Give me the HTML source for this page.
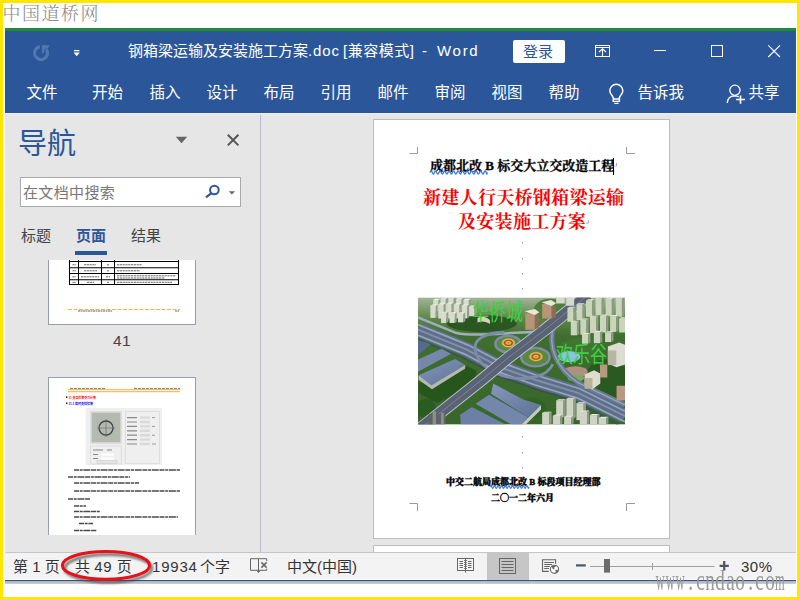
<!DOCTYPE html>
<html lang="zh-CN">
<head>
<meta charset="utf-8">
<title>钢箱梁运输及安装施工方案.doc [兼容模式] - Word</title>
<style>
html,body{margin:0;padding:0;}
body{width:800px;height:600px;overflow:hidden;background:#FFE600;position:relative;
  font-family:"Liberation Sans","Noto Sans CJK SC",sans-serif;}
.abs{position:absolute;}
#white{left:3px;top:3px;width:794px;height:594px;background:#fff;}
#wm1{left:2.5px;top:1px;letter-spacing:1.5px;font-weight:300;font-family:"Liberation Serif","Noto Serif CJK SC",serif;font-size:18px;color:#8a8a8a;line-height:26px;white-space:nowrap;}
#green{left:5px;top:28px;width:791px;height:3px;background:#1F8B34;}
#blue{left:5px;top:31px;width:791px;height:82px;background:#2B579A;}
#gray{left:5px;top:113px;width:791px;height:439px;background:#E6E6E6;border-top:1px solid #EFEEEA;box-sizing:border-box;}
.t{position:absolute;white-space:nowrap;color:#fff;line-height:20px;}
.title{top:41px;font-size:15px;}
.menu{top:83px;font-size:15.5px;}
#login{left:513px;top:40px;width:52px;height:23px;background:#fff;border-radius:2px;}
#login span{position:absolute;left:10px;top:2px;font-size:15px;line-height:20px;color:#2B579A;white-space:nowrap;}
#status{left:5px;top:552px;width:791px;height:28px;background:#F3F3F3;border-top:1px solid #C6C6C6;box-sizing:border-box;}
#sline{left:5px;top:579px;width:791px;height:1px;background:#2B579A;border-top:1px solid #FAFAF6;}
#sshadow{left:5px;top:581px;width:791px;height:3px;background:linear-gradient(#b0b0b0,#cfcfcf);}
#viewsel{left:487px;top:553px;width:42px;height:27px;background:#C6C6C6;}
.st{position:absolute;white-space:nowrap;color:#333;font-size:15px;line-height:20px;top:557px;}
.st b{font-weight:normal;letter-spacing:0.8px;}
#wm2{left:655.6px;top:572.6px;font-family:"Liberation Serif",serif;font-size:20px;line-height:20px;height:20px;color:#989898;white-space:nowrap;transform-origin:0 16.75px;transform:scaleY(1.52);}
#wm2 i{display:inline-block;width:9.95px;text-align:center;font-style:normal;}
#wm2 i b{display:inline-block;font-weight:normal;transform:scaleX(0.95);}
#wm2 i b.w{transform:scaleX(0.62);margin:0 -3px;}
#navdiv{left:260px;top:115px;width:1px;height:437px;background:#B9B9CE;}
#navtitle{left:18px;top:124px;font-size:29px;line-height:40px;font-weight:400;color:#2B579A;white-space:nowrap;}
#search{left:20px;top:177px;width:221px;height:30px;background:#fff;border:1px solid #ABABAB;box-sizing:border-box;}
#search span{position:absolute;left:2px;top:5px;letter-spacing:0.35px;font-size:15px;line-height:20px;color:#767676;white-space:nowrap;}
.tab{position:absolute;top:226px;font-size:15px;line-height:20px;color:#444;white-space:nowrap;}
#tabsel{color:#2B579A;font-weight:bold;}
#tabline{left:75px;top:251px;width:32px;height:4px;background:#2B579A;}
.thumb{position:absolute;background:#fff;border:1px solid #94A0B2;box-sizing:border-box;overflow:hidden;}
#th1{left:48px;top:260px;width:148px;height:65px;border-top:none;}
#th2{left:48px;top:377px;width:148px;height:158px;border-bottom:none;}
#thnum{left:113px;top:331px;font-size:15.5px;letter-spacing:0.3px;line-height:20px;color:#444;}
#page{left:373px;top:119px;width:297px;height:420px;background:#fff;border:1px solid #BDBDBD;box-sizing:border-box;}
#page2{left:373px;top:545px;width:297px;height:7px;background:#fff;border:1px solid #BDBDBD;border-bottom:none;box-sizing:border-box;}
.doc{position:absolute;white-space:nowrap;font-family:"Liberation Serif","Noto Serif CJK SC",serif;font-weight:bold;color:#000;}
#svgicons{position:absolute;left:0;top:0;width:800px;height:600px;pointer-events:none;}
</style>
</head>
<body>
<div id="white" class="abs"></div>
<div id="wm1" class="abs">中国道桥网</div>
<div id="green" class="abs"></div>
<div id="blue" class="abs"></div>
<div id="gray" class="abs"></div>

<!-- title bar -->
<div class="t title" style="left:128px">钢箱梁运输及安装施工方案<span style="letter-spacing:0.9px">.doc</span></div>
<div class="t title" style="left:343px;letter-spacing:0.5px">[兼容模式]</div>
<div class="t title" style="left:422px">-</div>
<div class="t title" style="left:437px;letter-spacing:1.7px">Word</div>
<div id="login" class="abs"><span>登录</span></div>

<!-- ribbon tabs -->
<div class="t menu" style="left:26.5px">文件</div>
<div class="t menu" style="left:92px">开始</div>
<div class="t menu" style="left:149.5px">插入</div>
<div class="t menu" style="left:206.5px">设计</div>
<div class="t menu" style="left:263.5px">布局</div>
<div class="t menu" style="left:320.5px">引用</div>
<div class="t menu" style="left:377.5px">邮件</div>
<div class="t menu" style="left:434.5px">审阅</div>
<div class="t menu" style="left:491.5px">视图</div>
<div class="t menu" style="left:548.5px">帮助</div>
<div class="t menu" style="left:637.5px">告诉我</div>
<div class="t menu" style="left:748.5px">共享</div>

<!-- navigation pane -->
<div id="navdiv" class="abs"></div>
<div id="navtitle" class="abs">导航</div>
<div id="search" class="abs"><span>在文档中搜索</span></div>
<div class="tab" style="left:21px">标题</div>
<div class="tab" id="tabsel" style="left:76px">页面</div>
<div class="tab" style="left:131px">结果</div>
<div id="tabline" class="abs"></div>
<div id="th1" class="thumb"><svg width="146" height="64" viewBox="49 260 146 64" style="position:absolute;left:0;top:0">
<g fill="none" stroke="#000" stroke-width="1.05">
<path d="M69.5 260 V284.5 M78.5 260 V284.5 M101.5 260 V284.5 M114.5 260 V284.5 M178.5 260 V284.5"/>
<path d="M69 261.5 H179 M69 267.8 H179 M69 273.5 H179 M69 279.8 H179 M69 284.5 H179"/>
</g>
<g stroke="#666" stroke-width="1" fill="none" stroke-dasharray="2.2 0.6">
<path d="M72.5 264.8 H76 M84 264.8 H96 M107 264.8 H109 M117 264.8 H142"/>
<path d="M72.5 270.8 H76 M84 270.8 H97 M107 270.8 H109 M117 270.8 H140"/>
<path d="M72.5 276.8 H76 M81 276.8 H99 M106 276.8 H110 M117 275.8 H176 M117 278 H165"/>
<path d="M72.5 282.3 H76 M87 282.3 H94 M107 282.3 H109 M117 282.3 H172"/>
</g>
<path d="M68 309.5 H180" stroke="#F2B24A" stroke-width="1" stroke-dasharray="4 1.5" fill="none"/>
<path d="M78 311 H112 M175 311 H179" stroke="#666" stroke-width="1.2" stroke-dasharray="2 0.5" fill="none"/>
</svg></div>
<div id="thnum" class="abs">41</div>
<div id="th2" class="thumb"><svg width="146" height="157" viewBox="49 378 146 157" style="position:absolute;left:0;top:0">
<path d="M68 389.6 H180 M68 391.6 H180" stroke="#F7BE62" stroke-width="1.2" fill="none"/>
<path d="M70 388.4 H105 M134 388.4 H180" stroke="#777" stroke-width="1" stroke-dasharray="3 1" fill="none"/>
<rect x="66" y="396.5" width="1.4" height="1.4" fill="#000"/><rect x="66" y="402.5" width="1.4" height="1.4" fill="#000"/>
<text x="68.5" y="399.2" font-family="'Liberation Sans','Noto Sans CJK SC',sans-serif" font-size="3.3" font-weight="bold" fill="#F01010" textLength="27.5" lengthAdjust="spacingAndGlyphs">11 支架验算受力计算</text>
<text x="68.5" y="404.8" font-family="'Liberation Sans','Noto Sans CJK SC',sans-serif" font-size="3.3" font-weight="bold" fill="#1010F0" textLength="24.5" lengthAdjust="spacingAndGlyphs">11.1 临时支撑验算</text>
<rect x="85.5" y="408" width="76.5" height="57" fill="#EFEFEF"/>
<rect x="90.5" y="411.5" width="31" height="32" fill="#EAEAEA" stroke="#D5D5D5" stroke-width="0.6"/>
<rect x="91.5" y="412.5" width="29" height="30" fill="#B4BAB0"/>
<circle cx="106" cy="428" r="7" fill="none" stroke="#444" stroke-width="1.3"/>
<path d="M97 428 H115 M106 419 V437" stroke="#666" stroke-width="0.6" fill="none"/>
<rect x="125.5" y="411.5" width="34" height="52" fill="none" stroke="#D8D8D8" stroke-width="0.7"/>
<g stroke="#8a8a8a" stroke-width="1.2" fill="none">
<path d="M127 417.6 H137 M127 422 H137 M127 426.4 H137 M127 430.8 H137 M127 435.2 H137 M127 439.6 H137 M127 444 H137"/>
</g>
<g stroke="#DADADA" stroke-width="2.4" fill="none">
<path d="M140 417.6 H150 M140 422 H150 M140 426.4 H150 M140 430.8 H150 M140 435.2 H150 M140 439.6 H150 M140 444 H150"/>
</g>
<path d="M152 417.6 H155 M152 426.4 H155 M152 435.2 H155 M152 444 H156" stroke="#999" stroke-width="1" fill="none"/>
<rect x="90.5" y="446" width="31" height="18" fill="none" stroke="#D8D8D8" stroke-width="0.7"/>
<path d="M93 450 H103 M93 454.5 H98 M93 458.5 H98 M107 450 H112" stroke="#888" stroke-width="1.1" fill="none"/>
<path d="M101 454.5 H114 M101 458.5 H114" stroke="#fff" stroke-width="2.2" fill="none"/>
<rect x="97" y="460.4" width="20" height="3" fill="#E4E4E4" stroke="#C8C8C8" stroke-width="0.5"/>
<g stroke="#4a4a4a" stroke-width="1.5" fill="none" stroke-dasharray="5 0.7 3 0.7 7 0.7">
<path d="M74 470 H180"/><path d="M68 477 H130"/><path d="M74 483 H139"/><path d="M74 491 H180"/><path d="M68 499 H90"/><path d="M74 506 H86"/><path d="M74 511.6 H100"/><path d="M74 517 H178"/><path d="M79 523.6 H93"/><path d="M74 530.4 H97"/>
</g>
</svg></div>

<!-- document -->
<div id="page" class="abs"></div>
<div id="page2" class="abs"></div>
<div class="doc" style="left:430px;top:156px;font-size:13px;line-height:20px;-webkit-text-stroke:0.3px #000;">成都北改 B 标交大立交改造工程</div>
<div class="doc" style="left:423px;top:185px;font-size:18px;line-height:26px;letter-spacing:0.3px;color:#FF0000;">新建人行天桥钢箱梁运输</div>
<div class="doc" style="left:458px;top:209px;font-size:18px;line-height:26px;letter-spacing:0.3px;color:#FF0000;">及安装施工方案</div>
<svg class="abs" style="left:418px;top:297px" width="207" height="128" viewBox="28 25 737 453">
<defs>
<filter id="pb" x="-5%" y="-5%" width="110%" height="110%"><feGaussianBlur stdDeviation="2"/></filter>
<linearGradient id="roof" x1="0" y1="0" x2="1" y2="1"><stop offset="0" stop-color="#8597BC"/><stop offset="1" stop-color="#5E7095"/></linearGradient>
<linearGradient id="sky" x1="0" y1="0" x2="0" y2="1"><stop offset="0" stop-color="#A3B59A"/><stop offset="0.16" stop-color="#5F8749"/><stop offset="0.3" stop-color="#3F6E2F"/><stop offset="1" stop-color="#386629"/></linearGradient>
<radialGradient id="flw"><stop offset="0" stop-color="#B8902E"/><stop offset="0.3" stop-color="#D9BC48"/><stop offset="0.55" stop-color="#C43626"/><stop offset="0.78" stop-color="#DCC650"/><stop offset="1" stop-color="#86A84E"/></radialGradient>
<clipPath id="pc"><rect x="28" y="25" width="737" height="453"/></clipPath>
</defs>
<g clip-path="url(#pc)">
<rect x="28" y="25" width="737" height="453" fill="url(#sky)"/>
<g filter="url(#pb)">
<!-- tree masses -->
<ellipse cx="255" cy="118" rx="125" ry="30" fill="#2C5722"/>
<path d="M75 340 L200 268 L236 285 L232 330 L96 402 L30 365 L30 325 Z" fill="#27571D"/>
<ellipse cx="700" cy="320" rx="80" ry="75" fill="#2C5A23"/>
<ellipse cx="610" cy="205" rx="80" ry="36" fill="#3F7433"/>
<ellipse cx="430" cy="420" rx="55" ry="36" fill="#2F6424"/>
<ellipse cx="55" cy="420" rx="36" ry="34" fill="#2B5C20"/>
<ellipse cx="500" cy="70" rx="60" ry="40" fill="#4E7F3E"/>
<!-- park + pond -->
<ellipse cx="588" cy="290" rx="44" ry="20" fill="#B0907E"/>
<ellipse cx="590" cy="312" rx="30" ry="12" fill="#7FA860"/>
<ellipse cx="566" cy="236" rx="40" ry="20" fill="#86C4E0"/>
<!-- upper light ramp -->
<path d="M28 96 L165 152 C230 166 330 152 395 150 L490 146" fill="none" stroke="#A2AEC0" stroke-width="9"/>
<!-- main highway NW-SE -->
<path d="M28 140 L200 210 L324 275 L450 320 L600 366 L765 448" fill="none" stroke="#5E6E88" stroke-width="52" stroke-linejoin="round"/>
<path d="M28 122 L205 194 L330 259 L455 304 L604 350 L765 430" fill="none" stroke="#93A3BC" stroke-width="6"/>
<path d="M28 140 L200 210 L324 275 L450 320 L600 366 L765 448" fill="none" stroke="#8190AA" stroke-width="7"/>
<path d="M28 160 L194 227 L318 292 L445 337 L596 383 L765 468" fill="none" stroke="#97A6BE" stroke-width="6"/>
<path d="M28 175 L188 240 L312 304 L440 350 L590 396 L740 478" fill="none" stroke="#3E4C60" stroke-width="5"/>
<!-- right parallel ramp -->
<path d="M512 122 C488 200 520 278 600 330 L765 408" fill="none" stroke="#6C7B98" stroke-width="18"/>
<path d="M512 122 C488 200 520 278 600 330 L765 408" fill="none" stroke="#9AA8C0" stroke-width="4"/>
<!-- ramps -->
<g fill="none" stroke="#7D8CA6" stroke-width="10">
<path d="M335 150 C262 150 224 178 232 214 C240 258 286 296 345 308 C420 324 490 306 508 262"/>
<ellipse cx="349" cy="191" rx="45" ry="29"/>
<ellipse cx="446" cy="238" rx="50" ry="32"/>
</g>
<ellipse cx="349" cy="191" rx="40" ry="24" fill="#5B883C"/>
<ellipse cx="446" cy="238" rx="45" ry="27" fill="#5B883C"/>
<ellipse cx="350" cy="187" rx="25" ry="17" fill="url(#flw)"/>
<ellipse cx="448" cy="236" rx="25" ry="17" fill="url(#flw)"/>
<!-- cross road SW-NE (bridge) -->
<path d="M36 492 L259 315 L349 240 L480 140 L634 16" fill="none" stroke="#C4CBD6" stroke-width="44"/>
<path d="M36 492 L259 315 L349 240 L480 140 L634 16" fill="none" stroke="#5A6474" stroke-width="38"/>
<path d="M36 492 L259 315 L349 240 L480 140 L634 16" fill="none" stroke="#8791A4" stroke-width="2.5"/>
<!-- roofs left -->
<path d="M28 176 L74 192 L28 230 Z" fill="#566A8E"/>
<path d="M28 246 L112 208 L146 226 L28 290 Z" fill="#7587AB"/>
<path d="M30 302 L160 244 L196 266 L76 338 Z" fill="url(#roof)"/>
<path d="M30 302 L76 338 L196 266 L196 278 L78 352 L30 318 Z" fill="#B4B9B2"/>
<!-- roofs bottom -->
<path d="M296 332 L401 388 L466 408 L420 452 L288 368 Z" fill="url(#roof)"/>
<path d="M281 372 L420 452 L396 478 L360 478 L233 404 Z" fill="#7386AC"/>
<path d="M220 415 L340 478 L180 478 L178 443 Z" fill="#6C7FA5"/>
<path d="M466 408 L466 424 L412 478 L396 478 Z" fill="#C5C9C2"/>
<!-- buildings upper-left -->
<g><path d="M82 34 h19 v40 h-19z" fill="#D6DDCC"/><path d="M101 34 l7 -4 v40 l-7 4z" fill="#93A08A"/><path d="M82 34 l7 -4 h19 l-7 4z" fill="#EEF1E6"/><path d="M108 30 h19 v46 h-19z" fill="#D6DDCC"/><path d="M127 30 l7 -4 v46 l-7 4z" fill="#93A08A"/><path d="M108 30 l7 -4 h19 l-7 4z" fill="#EEF1E6"/><path d="M136 28 h19 v46 h-19z" fill="#D6DDCC"/><path d="M155 28 l7 -4 v46 l-7 4z" fill="#93A08A"/><path d="M136 28 l7 -4 h19 l-7 4z" fill="#EEF1E6"/><path d="M164 30 h19 v44 h-19z" fill="#D6DDCC"/><path d="M183 30 l7 -4 v44 l-7 4z" fill="#93A08A"/><path d="M164 30 l7 -4 h19 l-7 4z" fill="#EEF1E6"/><path d="M190 34 h19 v40 h-19z" fill="#D6DDCC"/><path d="M209 34 l7 -4 v40 l-7 4z" fill="#93A08A"/><path d="M190 34 l7 -4 h19 l-7 4z" fill="#EEF1E6"/><path d="M72 54 h19 v44 h-19z" fill="#D6DDCC"/><path d="M91 54 l7 -4 v44 l-7 4z" fill="#93A08A"/><path d="M72 54 l7 -4 h19 l-7 4z" fill="#EEF1E6"/><path d="M100 50 h19 v50 h-19z" fill="#D6DDCC"/><path d="M119 50 l7 -4 v50 l-7 4z" fill="#93A08A"/><path d="M100 50 l7 -4 h19 l-7 4z" fill="#EEF1E6"/><path d="M128 48 h19 v52 h-19z" fill="#D6DDCC"/><path d="M147 48 l7 -4 v52 l-7 4z" fill="#93A08A"/><path d="M128 48 l7 -4 h19 l-7 4z" fill="#EEF1E6"/><path d="M156 50 h19 v50 h-19z" fill="#D6DDCC"/><path d="M175 50 l7 -4 v50 l-7 4z" fill="#93A08A"/><path d="M156 50 l7 -4 h19 l-7 4z" fill="#EEF1E6"/><path d="M184 54 h19 v46 h-19z" fill="#D6DDCC"/><path d="M203 54 l7 -4 v46 l-7 4z" fill="#93A08A"/><path d="M184 54 l7 -4 h19 l-7 4z" fill="#EEF1E6"/><path d="M210 58 h19 v34 h-19z" fill="#D6DDCC"/><path d="M229 58 l7 -4 v34 l-7 4z" fill="#93A08A"/><path d="M210 58 l7 -4 h19 l-7 4z" fill="#EEF1E6"/><path d="M110 80 h19 v36 h-19z" fill="#D6DDCC"/><path d="M129 80 l7 -4 v36 l-7 4z" fill="#93A08A"/><path d="M110 80 l7 -4 h19 l-7 4z" fill="#EEF1E6"/><path d="M140 82 h19 v34 h-19z" fill="#D6DDCC"/><path d="M159 82 l7 -4 v34 l-7 4z" fill="#93A08A"/><path d="M140 82 l7 -4 h19 l-7 4z" fill="#EEF1E6"/><path d="M170 82 h19 v32 h-19z" fill="#D6DDCC"/><path d="M189 82 l7 -4 v32 l-7 4z" fill="#93A08A"/><path d="M170 82 l7 -4 h19 l-7 4z" fill="#EEF1E6"/></g>
<path d="M240 98 c14 -8 34 -4 44 8 v14 c-12 -10 -30 -12 -44 -6z" fill="#D8D2BC"/>
<!-- brown towers -->
<path d="M410 82 h34 v58 h-34z M470 48 h34 v52 h-34z" fill="#B79676"/>
<path d="M444 86 h14 v50 h-14z M504 54 h14 v44 h-14z" fill="#8C6E55"/>
<path d="M408 74 l36 -8 l16 12 l-16 10 z M468 42 l34 -8 l18 12 l-16 10 z" fill="#EDE6D6"/>
<!-- top middle/right buildings -->
<path d="M520 25 h30 v22 h-30z M556 25 h28 v30 h-28z" fill="#D5DAD0"/>
<g><path d="M560 62 h22 v50 h-22z" fill="#CBD5BE"/><path d="M582 62 l8 -4 v50 l-8 4z" fill="#8A9C80"/><path d="M560 62 l8 -4 h22 l-8 4z" fill="#E4EADA"/><path d="M592 50 h22 v56 h-22z" fill="#CBD5BE"/><path d="M614 50 l8 -4 v56 l-8 4z" fill="#8A9C80"/><path d="M592 50 l8 -4 h22 l-8 4z" fill="#E4EADA"/><path d="M626 36 h22 v58 h-22z" fill="#CBD5BE"/><path d="M648 36 l8 -4 v58 l-8 4z" fill="#8A9C80"/><path d="M626 36 l8 -4 h22 l-8 4z" fill="#E4EADA"/><path d="M660 28 h22 v60 h-22z" fill="#CBD5BE"/><path d="M682 28 l8 -4 v60 l-8 4z" fill="#8A9C80"/><path d="M660 28 l8 -4 h22 l-8 4z" fill="#E4EADA"/><path d="M696 30 h22 v62 h-22z" fill="#CBD5BE"/><path d="M718 30 l8 -4 v62 l-8 4z" fill="#8A9C80"/><path d="M696 30 l8 -4 h22 l-8 4z" fill="#E4EADA"/><path d="M732 28 h22 v66 h-22z" fill="#CBD5BE"/><path d="M754 28 l8 -4 v66 l-8 4z" fill="#8A9C80"/><path d="M732 28 l8 -4 h22 l-8 4z" fill="#E4EADA"/><path d="M572 112 h22 v48 h-22z" fill="#CBD5BE"/><path d="M594 112 l8 -4 v48 l-8 4z" fill="#8A9C80"/><path d="M572 112 l8 -4 h22 l-8 4z" fill="#E4EADA"/><path d="M606 104 h22 v54 h-22z" fill="#CBD5BE"/><path d="M628 104 l8 -4 v54 l-8 4z" fill="#8A9C80"/><path d="M606 104 l8 -4 h22 l-8 4z" fill="#E4EADA"/><path d="M640 94 h22 v58 h-22z" fill="#CBD5BE"/><path d="M662 94 l8 -4 v58 l-8 4z" fill="#8A9C80"/><path d="M640 94 l8 -4 h22 l-8 4z" fill="#E4EADA"/><path d="M676 90 h22 v60 h-22z" fill="#CBD5BE"/><path d="M698 90 l8 -4 v60 l-8 4z" fill="#8A9C80"/><path d="M676 90 l8 -4 h22 l-8 4z" fill="#E4EADA"/><path d="M712 92 h22 v56 h-22z" fill="#CBD5BE"/><path d="M734 92 l8 -4 v56 l-8 4z" fill="#8A9C80"/><path d="M712 92 l8 -4 h22 l-8 4z" fill="#E4EADA"/><path d="M744 100 h22 v50 h-22z" fill="#CBD5BE"/><path d="M766 100 l8 -4 v50 l-8 4z" fill="#8A9C80"/><path d="M744 100 l8 -4 h22 l-8 4z" fill="#E4EADA"/><path d="M612 156 h22 v34 h-22z" fill="#CBD5BE"/><path d="M634 156 l8 -4 v34 l-8 4z" fill="#8A9C80"/><path d="M612 156 l8 -4 h22 l-8 4z" fill="#E4EADA"/><path d="M654 148 h22 v40 h-22z" fill="#CBD5BE"/><path d="M676 148 l8 -4 v40 l-8 4z" fill="#8A9C80"/><path d="M654 148 l8 -4 h22 l-8 4z" fill="#E4EADA"/><path d="M694 150 h22 v34 h-22z" fill="#CBD5BE"/><path d="M716 150 l8 -4 v34 l-8 4z" fill="#8A9C80"/><path d="M694 150 l8 -4 h22 l-8 4z" fill="#E4EADA"/></g>
<!-- right mid buildings -->
<path d="M704 200 l40 -14 l21 8 v70 l-30 10 l-31 -14z" fill="#DCDCD2"/>
<path d="M704 214 h30 v52 h-30z" fill="#B8B5A6"/>
<path d="M621 300 l34 -16 l22 12 v36 l-28 20 l-28 -14z" fill="#DEDDCC"/>
<path d="M621 312 h28 v38 h-28z" fill="#B9B198"/>
<path d="M735 340 h30 v52 h-30z M676 264 h26 v46 h-26z" fill="#B89880"/>
<!-- bottom-right buildings -->
<g><path d="M520 392 h26 v60 h-26z" fill="#CDD4C4"/><path d="M546 392 l8 -4 v60 l-8 4z" fill="#8F9B86"/><path d="M520 392 l8 -4 h26 l-8 4z" fill="#E6EADD"/><path d="M556 386 h26 v70 h-26z" fill="#CDD4C4"/><path d="M582 386 l8 -4 v70 l-8 4z" fill="#8F9B86"/><path d="M556 386 l8 -4 h26 l-8 4z" fill="#E6EADD"/><path d="M592 402 h26 v60 h-26z" fill="#CDD4C4"/><path d="M618 402 l8 -4 v60 l-8 4z" fill="#8F9B86"/><path d="M592 402 l8 -4 h26 l-8 4z" fill="#E6EADD"/><path d="M470 436 h26 v42 h-26z" fill="#CDD4C4"/><path d="M496 436 l8 -4 v42 l-8 4z" fill="#8F9B86"/><path d="M470 436 l8 -4 h26 l-8 4z" fill="#E6EADD"/><path d="M508 446 h26 v32 h-26z" fill="#CDD4C4"/><path d="M534 446 l8 -4 v32 l-8 4z" fill="#8F9B86"/><path d="M508 446 l8 -4 h26 l-8 4z" fill="#E6EADD"/><path d="M548 450 h26 v28 h-26z" fill="#CDD4C4"/><path d="M574 450 l8 -4 v28 l-8 4z" fill="#8F9B86"/><path d="M548 450 l8 -4 h26 l-8 4z" fill="#E6EADD"/><path d="M604 432 h26 v46 h-26z" fill="#CDD4C4"/><path d="M630 432 l8 -4 v46 l-8 4z" fill="#8F9B86"/><path d="M604 432 l8 -4 h26 l-8 4z" fill="#E6EADD"/><path d="M640 444 h26 v34 h-26z" fill="#CDD4C4"/><path d="M666 444 l8 -4 v34 l-8 4z" fill="#8F9B86"/><path d="M640 444 l8 -4 h26 l-8 4z" fill="#E6EADD"/><path d="M672 454 h26 v24 h-26z" fill="#CDD4C4"/><path d="M698 454 l8 -4 v24 l-8 4z" fill="#8F9B86"/><path d="M672 454 l8 -4 h26 l-8 4z" fill="#E6EADD"/></g>
<!-- bottom-left corner junction -->
<path d="M66 440 h60 v38 h-60z" fill="#5E6468"/>
<path d="M80 430 h12 v48 h-12z M110 436 h10 v42 h-10z" fill="#8A8F88"/>
</g>
<text x="221" y="104" font-family="'Liberation Sans','Noto Sans CJK SC',sans-serif" font-size="80" fill="#3ED042" textLength="180" lengthAdjust="spacingAndGlyphs">华侨城</text>
<text x="519" y="256" font-family="'Liberation Sans','Noto Sans CJK SC',sans-serif" font-size="78" fill="#3ED042" textLength="182" lengthAdjust="spacingAndGlyphs">欢乐谷</text>
</g>
</svg>

<div class="doc" style="left:446px;top:475px;font-size:9px;line-height:14px;font-weight:900;-webkit-text-stroke:0.4px #000;">中交二航局成都北改 B 标段项目经理部</div>
<div class="doc" style="left:491px;top:491px;font-size:9px;line-height:14px;font-weight:900;-webkit-text-stroke:0.4px #000;">二〇一二年六月</div>

<!-- status bar -->
<div id="status" class="abs"></div>
<div id="sline" class="abs"></div>
<div id="viewsel" class="abs"></div>
<div id="sshadow" class="abs"></div>
<div class="st" style="left:13px">第 1 页</div>
<div class="st" style="left:75px">共 <b>49</b> 页</div>
<div class="st" style="left:152px"><b>19934</b></div>
<div class="st" style="left:200px">个字</div>
<div class="st" style="left:287px">中文(中国)</div>
<div class="st" style="left:741px"><b style="letter-spacing:.5px">30%</b></div>
<div id="wm2" class="abs"><i><b class="w">w</b></i><i><b class="w">w</b></i><i><b class="w">w</b></i><i><b>.</b></i><i><b>c</b></i><i><b>n</b></i><i><b>d</b></i><i><b>a</b></i><i><b>o</b></i><i><b>.</b></i><i><b>c</b></i><i><b>o</b></i><i><b class="w">m</b></i></div>

<svg id="svgicons" viewBox="0 0 800 600">
<defs>
<filter id="sh" x="-20%" y="-40%" width="140%" height="180%"><feGaussianBlur stdDeviation="1.3"/></filter>
</defs>
<!-- title bar: repeat (disabled) -->
<path d="M39.87 46.60 A6.5 6.5 0 1 0 46.32 49.27" fill="none" stroke="#5079B3" stroke-width="3.1"/>
<path d="M42 45 L50 45.4 L47.4 48.4 L44.6 49 L43.8 53.2 L42 53.2 Z" fill="#5079B3"/>
<!-- customize quick access -->
<rect x="74" y="50" width="5.4" height="1.3" fill="#fff"/>
<path d="M73.6 52.6 H79.8 L76.7 56.2 Z" fill="#fff"/>
<!-- ribbon display options -->
<g fill="none" stroke="#fff" stroke-width="1">
<rect x="595.5" y="45.5" width="14" height="11"/>
<path d="M595.5 47.5 H609.5"/>
<path d="M602.5 56 V49 M599 52 L602.5 48.8 L606 52" stroke-width="1.1"/>
</g>
<!-- window controls -->
<g fill="none" stroke="#fff" stroke-width="1">
<path d="M654 50.5 H666"/>
<rect x="711.5" y="45.5" width="11" height="11"/>
<path d="M768.3 45.3 L780 57 M780 45.3 L768.3 57" stroke-width="1.1"/>
</g>
<!-- tell me lightbulb -->
<g fill="none" stroke="#fff" stroke-width="1.5">
<path d="M613.2 98 C613.2 95.6 609.8 94.6 609.8 90.8 A6.5 6.5 0 0 1 622.8 90.8 C622.8 94.6 619.4 95.6 619.4 98"/>
<path d="M613.2 97.6 V101.4 H619.4 V97.6 M613.2 99 H619.4" stroke-width="1.4"/>
<path d="M614.3 103.4 H618.6" stroke-width="1.3"/>
</g>
<!-- share person -->
<g fill="none" stroke="#fff" stroke-width="1.3">
<circle cx="734.9" cy="90.2" r="5.1"/>
<path d="M727.3 103 C727.6 98.6 730.6 96 734.4 95.9 C736.2 95.9 737.6 96.3 738.8 97"/>
<path d="M740.5 95.4 V103.8 M736.1 99.5 H745" stroke-width="1.6"/>
</g>
<!-- nav pane: dropdown + close -->
<path d="M175.8 136.8 H187.2 L181.5 143.2 Z" fill="#666"/>
<path d="M227.8 134.8 L238.4 145.4 M238.4 134.8 L227.8 145.4" stroke="#555" stroke-width="2" fill="none"/>
<!-- search magnifier -->
<g fill="none" stroke="#2B579A" stroke-width="2">
<circle cx="214.4" cy="190" r="4.3"/>
<path d="M211.4 193.2 L206 197.4" stroke-width="2.2"/>
</g>
<path d="M228.8 191.2 H235 L231.9 194.4 Z" fill="#666"/>
<!-- status bar: proofing -->
<g fill="none" stroke="#666" stroke-width="1">
<path d="M258.5 558.7 H250.5 V570.3 H258.5"/>
<path d="M258.5 558.7 H266.7 V561 M266.7 568.6 V570.3 H258.5"/>
<path d="M258.5 559 V572 M257.2 570.8 L258.5 572.6 L259.8 570.8" />
<path d="M261.4 562.4 L266.6 567.6 M266.6 562.4 L261.4 567.6" stroke-width="1.5"/>
</g>
<!-- read mode -->
<g fill="none" stroke="#666" stroke-width="1">
<rect x="457.5" y="558.5" width="16" height="12"/>
<path d="M465.5 559 V572.6"/><path d="M465.5 560 V572" stroke-width="2.6" stroke-dasharray="1 1"/>
<path d="M459.5 561.5 H463 M459.5 563.5 H463 M459.5 565.5 H463 M459.5 567.5 H463 M468 561.5 H471.5 M468 563.5 H471.5 M468 565.5 H471.5 M468 567.5 H471.5"/>
</g>
<!-- print layout -->
<g fill="none" stroke="#666" stroke-width="1">
<rect x="499.5" y="558.5" width="16" height="15"/>
<path d="M501.5 561.5 H513.5 M501.5 564.5 H513.5 M501.5 567.5 H513.5 M501.5 570.5 H513.5"/>
</g>
<!-- web layout -->
<g fill="none" stroke="#666" stroke-width="1.1">
<path d="M548.8 571.4 H542.5 V559.7 H555.6 V563.8"/>
<path d="M544.2 562.5 H554 M544.2 564.5 H552 M544.2 566.5 H549.7 M544.2 568.5 H549"/>
</g>
<circle cx="554.5" cy="569.3" r="4.1" fill="#fff" stroke="#666" stroke-width="1.1"/>
<path d="M551.6 566.6 C552.8 565.4 554.6 565.2 556 565.8 L555.2 567.2 L553.8 567.6 L554.6 569 L553.4 569.6 L552.4 568.2 Z M555.2 570.2 L557.2 569.6 L558.2 571 C557.6 572.4 556.4 573.2 555.2 573.3 L555.8 571.8 Z" fill="#666"/>
<!-- zoom slider -->
<rect x="576" y="564.3" width="9.8" height="2.2" fill="#4A5568"/>
<rect x="590" y="566" width="124.5" height="1" fill="#A0A0A0"/>
<rect x="652" y="563" width="1" height="7" fill="#A0A0A0"/>
<rect x="604" y="559" width="6" height="13.6" fill="#6B6B6B"/>
<path d="M719.6 565.8 H728.8 M724.2 561 V570.6" stroke="#4A5568" stroke-width="2.2" fill="none"/>
<!-- document: corner marks, cursor, paragraph dots, squiggles -->
<g fill="none" stroke="#9A9A9A" stroke-width="1">
<path d="M409.5 153.5 H417.5 V147"/>
<path d="M635 153.5 H626.5 V147"/>
<path d="M409.5 503.5 H417.5 V511"/>
<path d="M635 503.5 H626.5 V511"/>
</g>
<rect x="613" y="158" width="1" height="17" fill="#000"/>
<path d="M616.5 163 v3 h-2 M588.5 220 v3 h-2.5" fill="none" stroke="#9AA6BC" stroke-width="0.9"/>
<g fill="#999">
<rect x="522" y="242" width="1" height="1.4"/><rect x="522" y="258" width="1" height="1.4"/><rect x="522" y="273" width="1" height="1.4"/><rect x="522" y="288" width="1" height="1.4"/>
<rect x="522" y="436" width="1" height="1.4"/><rect x="522" y="452" width="1" height="1.4"/><rect x="522" y="467" width="1" height="1.4"/>
</g>
<path d="M430 172.5 Q431.12 169.50 432.25 172.5 Q433.38 175.50 434.50 172.5 Q435.62 169.50 436.75 172.5 Q437.88 175.50 439.00 172.5 Q440.12 169.50 441.25 172.5 Q442.38 175.50 443.50 172.5 Q444.62 169.50 445.75 172.5 Q446.88 175.50 448.00 172.5 Q449.12 169.50 450.25 172.5 Q451.38 175.50 452.50 172.5 Q453.62 169.50 454.75 172.5 Q455.88 175.50 457.00 172.5 Q458.12 169.50 459.25 172.5 Q460.38 175.50 461.50 172.5 Q462.62 169.50 463.75 172.5 Q464.88 175.50 466.00 172.5 Q467.12 169.50 468.25 172.5 Q469.38 175.50 470.50 172.5 Q471.62 169.50 472.75 172.5 Q473.88 175.50 475.00 172.5 Q476.12 169.50 477.25 172.5 Q478.38 175.50 479.50 172.5 Q480.62 169.50 481.75 172.5 Q482.88 175.50 484.00 172.5 Q485.12 169.50 486.25 172.5 Q486.88 175.50 487.50 172.5" fill="none" stroke="#3B7BDD" stroke-width="1.3"/>
<path d="M490 487 Q490.90 484.40 491.80 487 Q492.70 489.60 493.60 487 Q494.50 484.40 495.40 487 Q496.30 489.60 497.20 487 Q498.10 484.40 499.00 487 Q499.90 489.60 500.80 487 Q501.70 484.40 502.60 487 Q503.50 489.60 504.40 487 Q505.30 484.40 506.20 487 Q507.10 489.60 508.00 487 Q508.90 484.40 509.80 487 Q510.70 489.60 511.60 487 Q512.50 484.40 513.40 487 Q514.30 489.60 515.20 487 Q516.10 484.40 517.00 487 Q517.90 489.60 518.80 487 Q519.70 484.40 520.60 487 Q521.50 489.60 522.40 487 Q523.30 484.40 524.20 487 Q525.10 489.60 526.00 487 Q526.90 484.40 527.80 487 Q528.40 489.60 529.00 487" fill="none" stroke="#3B7BDD" stroke-width="1.2"/>
<!-- red highlight ellipse -->
<ellipse cx="108.3" cy="568.3" rx="43.5" ry="13.9" fill="none" stroke="#444" stroke-opacity="0.7" stroke-width="3" filter="url(#sh)"/>
<ellipse cx="106" cy="565.4" rx="43.6" ry="13.9" fill="none" stroke="#E8111A" stroke-width="3.1"/>
</svg>

</body>
</html>
